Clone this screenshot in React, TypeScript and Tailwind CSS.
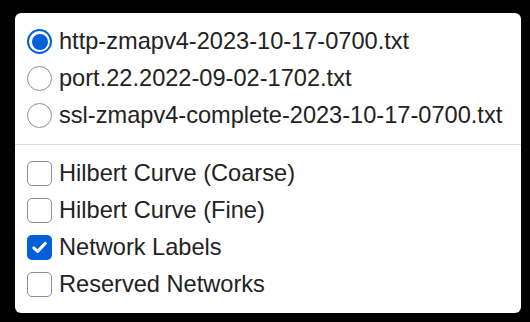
import { useState } from "react";

const files = [
  "http-zmapv4-2023-10-17-0700.txt",
  "port.22.2022-09-02-1702.txt",
  "ssl-zmapv4-complete-2023-10-17-0700.txt",
];

const layers = [
  "Hilbert Curve (Coarse)",
  "Hilbert Curve (Fine)",
  "Network Labels",
  "Reserved Networks",
];

function RadioMark({ checked }: { checked: boolean }) {
  return checked ? (
    <span className="flex h-[25px] w-[25px] shrink-0 items-center justify-center rounded-full border-[2px] border-[#005fd9] bg-white">
      <span className="h-[16px] w-[16px] rounded-full bg-[#005fd9]" />
    </span>
  ) : (
    <span className="h-[25px] w-[25px] shrink-0 rounded-full border-[1.5px] border-[#8f8f8f] bg-white" />
  );
}

function CheckMark({ checked }: { checked: boolean }) {
  return checked ? (
    <span className="flex h-[25px] w-[25px] shrink-0 items-center justify-center rounded-[5px] bg-[#005fd9]">
      <svg width="17" height="17" viewBox="0 0 17 17" fill="none">
        <path
          d="M2.8 8.8 L6.6 12.4 L14.2 4.4"
          stroke="white"
          strokeWidth="3"
          strokeLinecap="round"
          strokeLinejoin="round"
        />
      </svg>
    </span>
  ) : (
    <span className="h-[25px] w-[25px] shrink-0 rounded-[5px] border-[1.5px] border-[#8f8f8f] bg-white" />
  );
}

export default function App() {
  const [file, setFile] = useState(0);
  const [on, setOn] = useState<boolean[]>([false, false, true, false]);

  return (
    <div className="min-h-[322px] bg-black pl-[15px] pt-[13px] font-['Liberation_Sans',Arial,sans-serif] text-[23.6px] text-[#222222]">
      <div className="w-[506px] rounded-[6px] bg-white py-[10px]">
        <div>
          {files.map((f, i) => (
            <label
              key={f}
              className="flex h-[37px] cursor-pointer items-center gap-[7px] px-[12px] leading-none"
              onClick={() => setFile(i)}
            >
              <RadioMark checked={file === i} />
              <span className="whitespace-nowrap">{f}</span>
            </label>
          ))}
        </div>

        <div className="my-[10px] h-px bg-[#dcdcdc]" />

        <div>
          {layers.map((l, i) => (
            <label
              key={l}
              className="flex h-[37px] cursor-pointer items-center gap-[7px] px-[12px] leading-none"
              onClick={() => setOn((v) => v.map((x, j) => (j === i ? !x : x)))}
            >
              <CheckMark checked={on[i]} />
              <span className="whitespace-nowrap">{l}</span>
            </label>
          ))}
        </div>
      </div>
    </div>
  );
}
